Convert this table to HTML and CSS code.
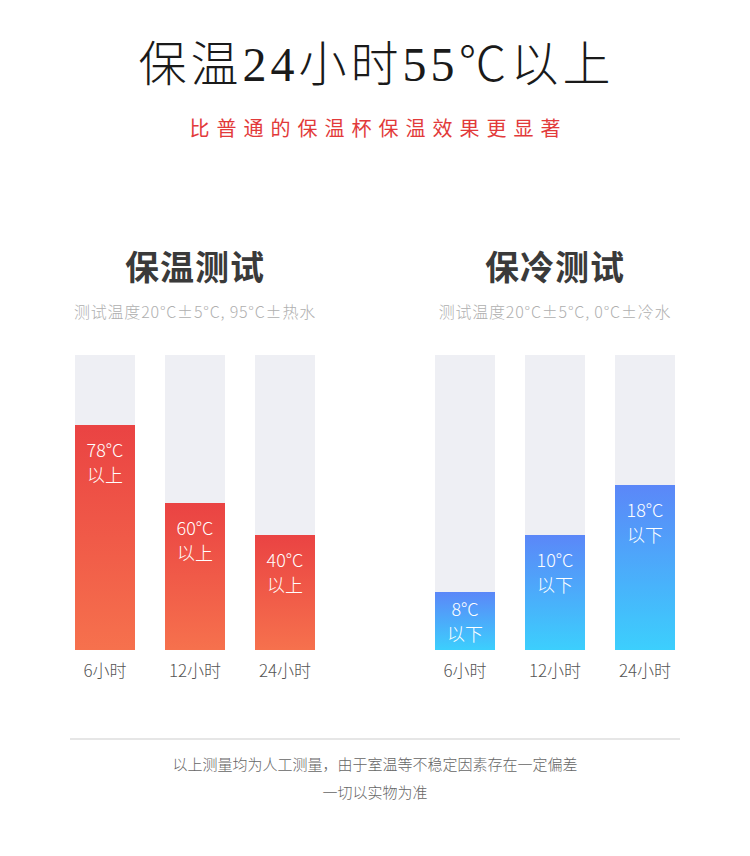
FILE: index.html
```html
<!DOCTYPE html>
<html lang="zh-CN">
<head>
<meta charset="utf-8">
<title>保温测试</title>
<link rel="stylesheet" href="styles.css">
</head>
<body>
<div class="page">
  <header class="hero">
    <h1 class="title"><span class="cjk">保温</span>24<span class="cjk">小时</span>55<span class="cjk">℃以上</span></h1>
    <p class="subtitle">比普通的保温杯保温效果更显著</p>
  </header>

  <section class="tests">
    <div class="test">
      <h2 class="test-title">保温测试</h2>
      <p class="test-desc">测试温度20°C±5°C, 95°C±热水</p>
      <div class="chart">
        <div class="col">
          <div class="track"><div class="fill hot" style="height:225px">78°C<br>以上</div></div>
          <div class="label">6小时</div>
        </div>
        <div class="col">
          <div class="track"><div class="fill hot" style="height:147px">60°C<br>以上</div></div>
          <div class="label">12小时</div>
        </div>
        <div class="col">
          <div class="track"><div class="fill hot" style="height:115px">40°C<br>以上</div></div>
          <div class="label">24小时</div>
        </div>
      </div>
    </div>

    <div class="test">
      <h2 class="test-title">保冷测试</h2>
      <p class="test-desc">测试温度20°C±5°C, 0°C±冷水</p>
      <div class="chart">
        <div class="col">
          <div class="track"><div class="fill cold short" style="height:58px">8°C<br>以下</div></div>
          <div class="label">6小时</div>
        </div>
        <div class="col">
          <div class="track"><div class="fill cold" style="height:115px">10°C<br>以下</div></div>
          <div class="label">12小时</div>
        </div>
        <div class="col">
          <div class="track"><div class="fill cold" style="height:165px">18°C<br>以下</div></div>
          <div class="label">24小时</div>
        </div>
      </div>
    </div>
  </section>

  <footer class="note">
    <p>以上测量均为人工测量，由于室温等不稳定因素存在一定偏差</p>
    <p>一切以实物为准</p>
  </footer>
</div>
</body>
</html>
```

FILE: styles.css
```css
* { box-sizing: border-box; }

body {
  margin: 0;
  background: #ffffff;
  font-family: "Noto Sans CJK SC", "Noto Sans", sans-serif;
}

.page {
  width: 750px;
  height: 856px;
  overflow: hidden;
}

.hero {
  text-align: center;
  padding-top: 35px;
}

.title {
  margin: 0 0 0 3px;
  height: 60px;
  font-family: "Liberation Serif", "Noto Sans CJK SC", serif;
  font-weight: 400;
  font-size: 48px;
  line-height: 60px;
  letter-spacing: 4px;
  color: #1a1a1a;
}

.title .cjk {
  font-family: "Noto Sans CJK SC", sans-serif;
  font-weight: 300;
  line-height: 1;
}

.subtitle {
  margin: 20px 0 0 7px;
  font-family: "Liberation Serif", "Noto Sans CJK SC", serif;
  font-size: 20px;
  line-height: 28px;
  letter-spacing: 7px;
  color: #e23a3a;
}

.tests {
  display: grid;
  grid-template-columns: 300px 300px;
  column-gap: 60px;
  padding: 0 45px;
  margin-top: 103px;
}

.test {
  display: flex;
  flex-direction: column;
  align-items: center;
}

.test-title {
  margin: 0;
  font-size: 34px;
  line-height: 40px;
  font-weight: 700;
  color: #3a3a3a;
  letter-spacing: 1px;
}

.test-desc {
  margin: 14px 0 0;
  font-size: 16px;
  line-height: 22px;
  font-weight: 300;
  letter-spacing: 0.8px;
  color: #afafaf;
}

.chart {
  display: flex;
  gap: 30px;
  margin-top: 33px;
}

.col {
  display: flex;
  flex-direction: column;
  align-items: center;
}

.track {
  width: 60px;
  height: 295px;
  background: #eeeff4;
  display: flex;
  flex-direction: column;
  justify-content: flex-end;
}

.fill {
  color: #ffffff;
  font-size: 18px;
  font-weight: 300;
  line-height: 25px;
  text-align: center;
  padding-top: 12px;
}

.fill.short { padding-top: 4px; }

.hot {
  background: linear-gradient(to bottom, #ea4343, #f6714d);
}

.cold {
  background: linear-gradient(to bottom, #5b87f8, #3ccffd);
}

.label {
  margin-top: 7px;
  font-size: 17px;
  font-weight: 300;
  line-height: 26px;
  color: #555555;
}

.note {
  margin: 55px auto 0;
  width: 610px;
  border-top: 2px solid #e6e6e6;
  padding-top: 10px;
  text-align: center;
}

.note p {
  margin: 0;
  font-size: 15px;
  font-weight: 300;
  line-height: 28px;
  color: #666666;
}
```
